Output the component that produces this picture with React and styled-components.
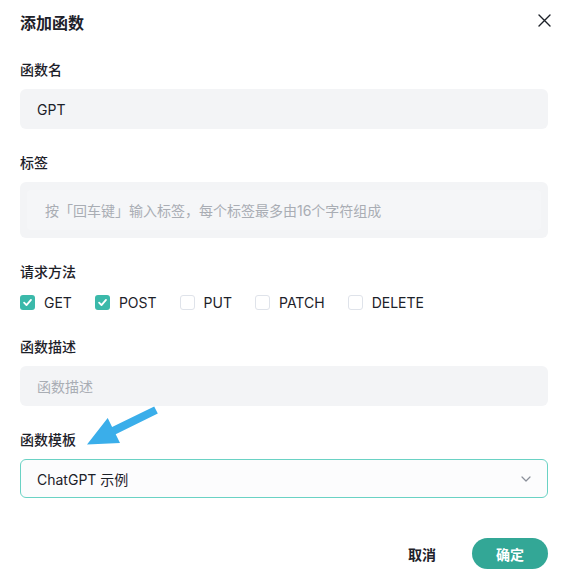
import React from "react";
import styled, { createGlobalStyle } from "styled-components";

const Global = createGlobalStyle`
  html, body { margin: 0; padding: 0; background: #fff; }
  body {
    font-family: Inter, "Noto Sans CJK SC", sans-serif;
    color: #1d2129;
    -webkit-font-smoothing: antialiased;
  }
  * { box-sizing: border-box; }
`;

const Dialog = styled.div`
  position: relative;
  width: 568px;
  height: 580px;
  padding: 11px 20px 0 20px;
  display: flex;
  flex-direction: column;
  background: #fff;
`;

const Header = styled.div`
  display: flex;
  align-items: center;
  justify-content: space-between;
  height: 24px;
  margin-bottom: 24px;
`;

const Title = styled.div`
  font-size: 16px;
  font-weight: 600;
  line-height: 24px;
  color: #1d2129;
`;

const Close = styled.button`
  border: none;
  background: none;
  padding: 0;
  margin-right: -3px;
  margin-top: -6px;
  width: 14px;
  height: 14px;
  display: flex;
  align-items: center;
  justify-content: center;
  color: #1d2129;
`;

const Item = styled.div`
  display: flex;
  flex-direction: column;
  margin-bottom: 23px;
`;

const Label = styled.div`
  font-size: 14px;
  font-weight: 500;
  line-height: 22px;
  height: 22px;
  margin-bottom: 8px;
  color: #1d2129;
`;

const Input = styled.div`
  height: 40px;
  border-radius: 6px;
  background: #f3f4f6;
  padding: 0 17px;
  display: flex;
  align-items: center;
  font-size: 14px;
  color: ${(p) => (p.$placeholder ? "#a9adb4" : "#1d2129")};
`;

const TagBox = styled.div`
  height: 56px;
  border-radius: 6px;
  background: #f3f4f6;
  padding: 8px 7px;
  display: flex;
`;

const TagInner = styled.div`
  flex: 1;
  border-radius: 4px;
  background: #f5f6f8;
  padding: 0 18px;
  display: flex;
  align-items: center;
  font-size: 14px;
  color: #a9adb4;
`;

const Methods = styled.div`
  display: flex;
  align-items: center;
  gap: 23px;
  height: 22px;
`;

const Method = styled.label`
  display: flex;
  align-items: center;
  gap: 9px;
  font-size: 14px;
  color: #1d2129;
`;

const Box = styled.span`
  width: 15px;
  height: 15px;
  border-radius: 3px;
  display: flex;
  align-items: center;
  justify-content: center;
  background: ${(p) => (p.$checked ? "#3bb9aa" : "#fff")};
  border: ${(p) => (p.$checked ? "none" : "1.5px solid #dfe3ea")};
`;

const Select = styled.div`
  height: 39px;
  border-radius: 6px;
  border: 1px solid #6ad2c4;
  background: #fcfcfd;
  padding: 0 16px;
  display: flex;
  align-items: center;
  justify-content: space-between;
  font-size: 14px;
  color: #1d2129;
`;

const Footer = styled.div`
  display: flex;
  justify-content: flex-end;
  align-items: center;
  gap: 36px;
  margin-top: 17px;
`;

const Cancel = styled.button`
  border: none;
  background: none;
  padding: 0;
  font-family: inherit;
  font-size: 14px;
  font-weight: 600;
  color: #1d2129;
`;

const Confirm = styled.button`
  border: none;
  width: 76px;
  height: 31px;
  border-radius: 16px;
  background: #33a796;
  color: #fff;
  font-family: inherit;
  font-size: 14px;
  font-weight: 600;
`;

const Arrow = styled.svg`
  position: absolute;
  left: 80px;
  top: 400px;
  width: 85px;
  height: 50px;
  pointer-events: none;
`;

const Check = () => (
  <svg width="11" height="11" viewBox="0 0 12 12">
    <path d="M2.3 6.2 L4.9 8.8 L9.8 3.2" fill="none" stroke="#fff" strokeWidth="2" strokeLinecap="round" strokeLinejoin="round" />
  </svg>
);

const methods = [
  { name: "GET", checked: true },
  { name: "POST", checked: true },
  { name: "PUT", checked: false },
  { name: "PATCH", checked: false },
  { name: "DELETE", checked: false },
];

export default function App() {
  return (
    <>
      <Global />
      <Dialog>
        <Header>
          <Title>添加函数</Title>
          <Close aria-label="close">
            <svg width="13" height="13" viewBox="0 0 13 13">
              <path d="M1 1 L12 12 M12 1 L1 12" stroke="#1d2129" strokeWidth="1.4" strokeLinecap="round" />
            </svg>
          </Close>
        </Header>

        <Item>
          <Label>函数名</Label>
          <Input>GPT</Input>
        </Item>

        <Item>
          <Label>标签</Label>
          <TagBox>
            <TagInner>按「回车键」输入标签，每个标签最多由16个字符组成</TagInner>
          </TagBox>
        </Item>

        <Item>
          <Label>请求方法</Label>
          <Methods>
            {methods.map((m) => (
              <Method key={m.name}>
                <Box $checked={m.checked}>{m.checked && <Check />}</Box>
                {m.name}
              </Method>
            ))}
          </Methods>
        </Item>

        <Item>
          <Label>函数描述</Label>
          <Input $placeholder>函数描述</Input>
        </Item>

        <Item>
          <Label>函数模板</Label>
          <Select>
            <span>ChatGPT 示例</span>
            <svg width="10" height="6" viewBox="0 0 10 6">
              <path d="M1 1 L5 5 L9 1" fill="none" stroke="#8a8f99" strokeWidth="1.2" strokeLinecap="round" strokeLinejoin="round" />
            </svg>
          </Select>
        </Item>

        <Footer>
          <Cancel>取消</Cancel>
          <Confirm>确定</Confirm>
        </Footer>

        <Arrow viewBox="80 400 85 50">
          <polygon
            points="154.2,406.4 112.1,427.1 107.7,418.1 87,444.5 120,443 115.7,434.3 157.8,413.6"
            fill="#3aaeea"
          />
        </Arrow>
      </Dialog>
    </>
  );
}
